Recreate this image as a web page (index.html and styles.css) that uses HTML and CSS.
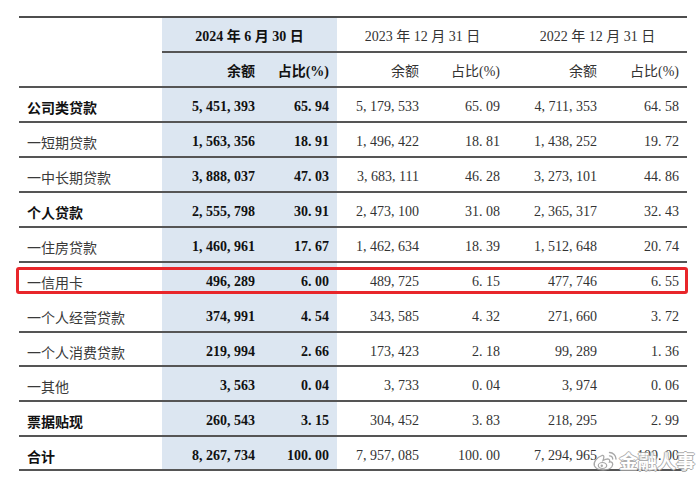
FILE: index.html
```html
<!DOCTYPE html>
<html lang="zh-CN">
<head>
<meta charset="utf-8">
<title>贷款结构</title>
<link rel="stylesheet" href="styles.css">
</head>
<body>
<div class="page">
  <table class="loans">
    <colgroup>
      <col class="c-label"><col class="c-a24"><col class="c-p24"><col class="c-a23"><col class="c-p23"><col class="c-a22"><col class="c-p22">
    </colgroup>
    <thead>
      <tr class="row">
        <th rowspan="2" class="label"></th>
        <th colspan="2" class="cur period">2024 年 6 月 30 日</th>
        <th colspan="2" class="period">2023 年 12 月 31 日</th>
        <th colspan="2" class="period">2022 年 12 月 31 日</th>
      </tr>
      <tr class="row">
        <th class="cur num">余额</th><th class="cur num">占比(%)</th>
        <th class="num">余额</th><th class="num">占比(%)</th>
        <th class="num">余额</th><th class="num">占比(%)</th>
      </tr>
    </thead>
    <tbody>
      <tr class="row"><td class="label strong">公司类贷款</td><td class="cur num">5, 451, 393</td><td class="cur num">65. 94</td><td class="num">5, 179, 533</td><td class="num">65. 09</td><td class="num">4, 711, 353</td><td class="num">64. 58</td></tr>
      <tr class="row"><td class="label">一短期贷款</td><td class="cur num">1, 563, 356</td><td class="cur num">18. 91</td><td class="num">1, 496, 422</td><td class="num">18. 81</td><td class="num">1, 438, 252</td><td class="num">19. 72</td></tr>
      <tr class="row"><td class="label">一中长期贷款</td><td class="cur num">3, 888, 037</td><td class="cur num">47. 03</td><td class="num">3, 683, 111</td><td class="num">46. 28</td><td class="num">3, 273, 101</td><td class="num">44. 86</td></tr>
      <tr class="row"><td class="label strong">个人贷款</td><td class="cur num">2, 555, 798</td><td class="cur num">30. 91</td><td class="num">2, 473, 100</td><td class="num">31. 08</td><td class="num">2, 365, 317</td><td class="num">32. 43</td></tr>
      <tr class="row"><td class="label">一住房贷款</td><td class="cur num">1, 460, 961</td><td class="cur num">17. 67</td><td class="num">1, 462, 634</td><td class="num">18. 39</td><td class="num">1, 512, 648</td><td class="num">20. 74</td></tr>
      <tr class="row noline"><td class="label hl">一信用卡<span class="mark"></span></td><td class="cur num">496, 289</td><td class="cur num">6. 00</td><td class="num">489, 725</td><td class="num">6. 15</td><td class="num">477, 746</td><td class="num">6. 55</td></tr>
      <tr class="row"><td class="label">一个人经营贷款</td><td class="cur num">374, 991</td><td class="cur num">4. 54</td><td class="num">343, 585</td><td class="num">4. 32</td><td class="num">271, 660</td><td class="num">3. 72</td></tr>
      <tr class="row short"><td class="label">一个人消费贷款</td><td class="cur num">219, 994</td><td class="cur num">2. 66</td><td class="num">173, 423</td><td class="num">2. 18</td><td class="num">99, 289</td><td class="num">1. 36</td></tr>
      <tr class="row"><td class="label">一其他</td><td class="cur num">3, 563</td><td class="cur num">0. 04</td><td class="num">3, 733</td><td class="num">0. 04</td><td class="num">3, 974</td><td class="num">0. 06</td></tr>
      <tr class="row"><td class="label strong">票据贴现</td><td class="cur num">260, 543</td><td class="cur num">3. 15</td><td class="num">304, 452</td><td class="num">3. 83</td><td class="num">218, 295</td><td class="num">2. 99</td></tr>
      <tr class="row short"><td class="label strong">合计</td><td class="cur num">8, 267, 734</td><td class="cur num">100. 00</td><td class="num">7, 957, 085</td><td class="num">100. 00</td><td class="num">7, 294, 965</td><td class="num">100. 00</td></tr>
    </tbody>
  </table>
  <div class="watermark">
    <svg class="wb" width="26" height="22" viewBox="0 0 26 22">
      <path d="M10 5.5 C4.5 7.5 1 12.5 2.5 16 C5 21 16.5 21.5 20 16.5 C22 13 19.5 11.5 17.5 12 C18.5 9 16 7.8 11 10.5 C12.5 6.5 12 5 10 5.5 Z" fill="#fff" stroke="#9a9a9a" stroke-width="1.3"/>
      <ellipse cx="10.5" cy="15.5" rx="4.2" ry="3" fill="none" stroke="#9a9a9a" stroke-width="1.2"/>
      <circle cx="9.8" cy="15.8" r="1.2" fill="#9a9a9a"/>
      <path d="M17.5 2.5 A6.5 6.5 0 0 1 24 9" fill="none" stroke="#9a9a9a" stroke-width="1.4" stroke-linecap="round"/>
      <path d="M17.5 5.8 A3.2 3.2 0 0 1 20.7 9" fill="none" stroke="#9a9a9a" stroke-width="1.3" stroke-linecap="round"/>
    </svg>
    <span class="wm-text">金融人事</span>
  </div>
</div>
</body>
</html>
```

FILE: styles.css
```css
html, body {
  margin: 0;
  padding: 0;
  background: #ffffff;
}

.page {
  position: relative;
  width: 700px;
  height: 481px;
  padding: 16px 0 0 19px;
  box-sizing: border-box;
  overflow: hidden;
  font-family: "Liberation Serif", "Noto Sans CJK SC", serif;
  font-size: 14px;
  color: #333333;
}

.loans {
  width: 668px;
  table-layout: fixed;
  border-collapse: separate;
  border-spacing: 0;
  border-top: 2px solid #4d4d4d;
}

.c-label { width: 143px; }
.c-a24 { width: 101px; }
.c-p24 { width: 74px; }
.c-a23 { width: 90px; }
.c-p23 { width: 81px; }
.c-a22 { width: 97px; }
.c-p22 { width: 82px; }

.row { height: 35px; }
.row.short { height: 34px; }

.loans th,
.loans td {
  padding: 5px 0 0 0;
  vertical-align: middle;
  border-bottom: 2px solid #555555;
  font-weight: 400;
  white-space: nowrap;
  line-height: 16px;
}

.row.noline td { border-bottom: 2px solid transparent; }

.label {
  text-align: left;
  padding-left: 8px !important;
  font-family: "Noto Sans CJK SC", sans-serif;
  color: #3a3a3a;
}

.label.strong {
  font-weight: 700;
  color: #111111;
}

.num {
  text-align: right;
  padding-right: 8px !important;
}

.period {
  text-align: center;
}

.cur {
  background: #dce6f1;
  color: #111111;
  font-weight: 700 !important;
}

.hl { position: relative; }

.mark {
  position: absolute;
  left: -3px;
  top: 4px;
  width: 672px;
  height: 27px;
  box-sizing: border-box;
  border: 3px solid #e8262a;
  border-radius: 3px;
}

.watermark {
  position: absolute;
  left: 592px;
  top: 449px;
  display: flex;
  align-items: center;
  gap: 1px;
  opacity: 0.85;
}

.wm-text {
  font-family: "Noto Sans CJK SC", sans-serif;
  font-weight: 700;
  font-size: 19px;
  line-height: 24px;
  color: #ffffff;
  letter-spacing: 0px;
  text-shadow: 1px 0 0 #a0a0a0, -1px 0 0 #a0a0a0, 0 1px 0 #a0a0a0, 0 -1px 0 #a0a0a0;
}
```
